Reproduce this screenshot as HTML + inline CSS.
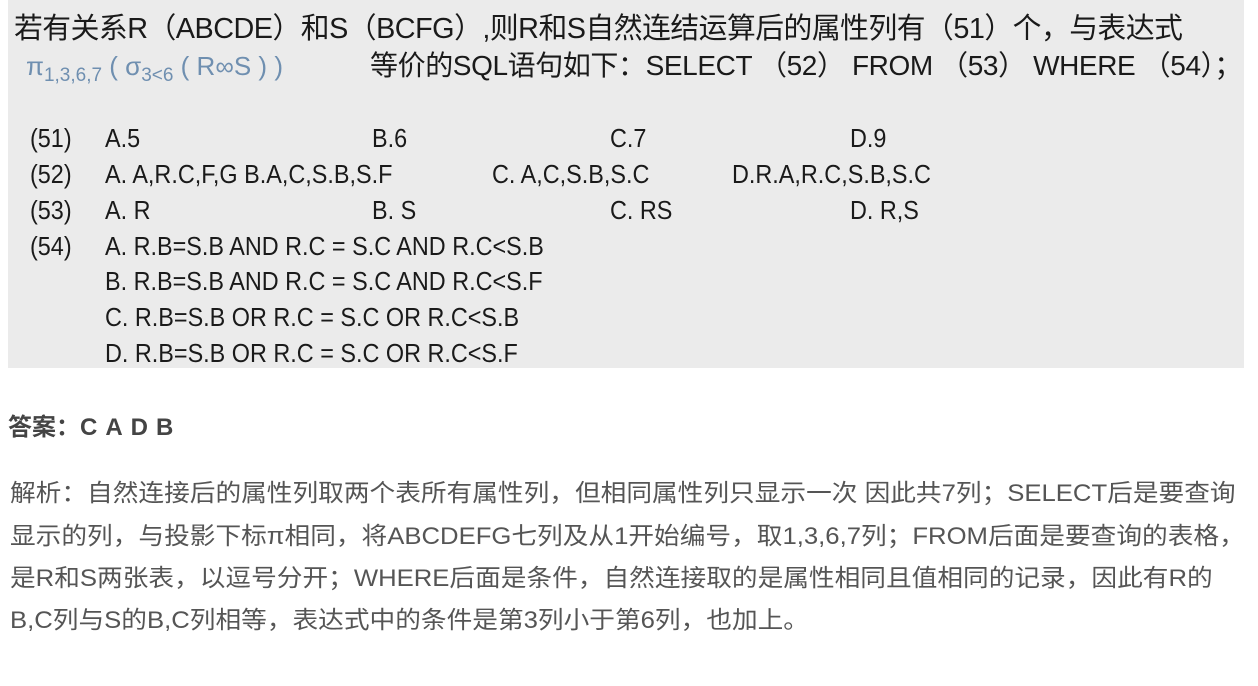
<!DOCTYPE html>
<html><head><meta charset="utf-8"><style>
body{margin:0;width:1258px;height:686px;background:#fff;position:relative;overflow:hidden;font-family:"Liberation Sans","Noto Sans CJK SC",sans-serif;}
.box{position:absolute;left:8px;top:0;width:1236px;height:368px;background:#ebebeb;}
.t{position:absolute;white-space:nowrap;color:#1a1a1a;}
.o{font-size:26px;line-height:30px;transform:scaleX(0.9);transform-origin:left center;}
.e{position:absolute;left:10px;font-size:24px;color:#555;white-space:nowrap;line-height:28px;transform:scaleX(1.07);transform-origin:left center;}
</style></head><body>
<div class="box"></div>
<div class="t" style="left:14px;top:11px;font-size:28.8px;line-height:36px;letter-spacing:-0.5px">若有关系R（ABCDE）和S（BCFG）,则R和S自然连结运算后的属性列有（51）个，与表达式</div>
<div class="t" style="left:26px;top:50px;font-size:26px;color:#6f8fb0;line-height:32px">π<sub style="font-size:19px">1,3,6,7</sub> ( σ<sub style="font-size:19px">3&lt;6</sub> ( R∞S ) )</div>
<div class="t" style="left:370px;top:49px;font-size:28px;line-height:34px;letter-spacing:-0.4px">等价的SQL语句如下：SELECT （52） FROM （53） WHERE （54）；</div>
<div class="t o" style="left:30px;top:123px">(51)</div><div class="t o" style="left:105px;top:123px">A.5</div><div class="t o" style="left:372px;top:123px">B.6</div><div class="t o" style="left:610px;top:123px">C.7</div><div class="t o" style="left:850px;top:123px">D.9</div>
<div class="t o" style="left:30px;top:159px">(52)</div><div class="t o" style="left:105px;top:159px">A. A,R.C,F,G B.A,C,S.B,S.F</div><div class="t o" style="left:492px;top:159px">C. A,C,S.B,S.C</div><div class="t o" style="left:732px;top:159px">D.R.A,R.C,S.B,S.C</div>
<div class="t o" style="left:30px;top:195px">(53)</div><div class="t o" style="left:105px;top:195px">A. R</div><div class="t o" style="left:372px;top:195px">B. S</div><div class="t o" style="left:610px;top:195px">C. RS</div><div class="t o" style="left:850px;top:195px">D. R,S</div>
<div class="t o" style="left:30px;top:231px">(54)</div><div class="t o" style="left:105px;top:231px">A. R.B=S.B AND R.C = S.C AND R.C&lt;S.B</div>
<div class="t o" style="left:105px;top:266px">B. R.B=S.B AND R.C = S.C AND R.C&lt;S.F</div>
<div class="t o" style="left:105px;top:302px">C. R.B=S.B OR R.C = S.C OR R.C&lt;S.B</div>
<div class="t o" style="left:105px;top:338px">D. R.B=S.B OR R.C = S.C OR R.C&lt;S.F</div>
<div class="t" style="left:8px;top:412px;font-size:24px;font-weight:bold;color:#444;line-height:32px">答案：<span style="letter-spacing:8px">CADB</span></div>
<div class="e" style="top:480px">解析：自然连接后的属性列取两个表所有属性列，但相同属性列只显示一次 因此共7列；SELECT后是要查询</div>
<div class="e" style="top:523px">显示的列，与投影下标π相同，将ABCDEFG七列及从1开始编号，取1,3,6,7列；FROM后面是要查询的表格，</div>
<div class="e" style="top:565px">是R和S两张表，以逗号分开；WHERE后面是条件，自然连接取的是属性相同且值相同的记录，因此有R的</div>
<div class="e" style="top:607px">B,C列与S的B,C列相等，表达式中的条件是第3列小于第6列，也加上。</div>
</body></html>
